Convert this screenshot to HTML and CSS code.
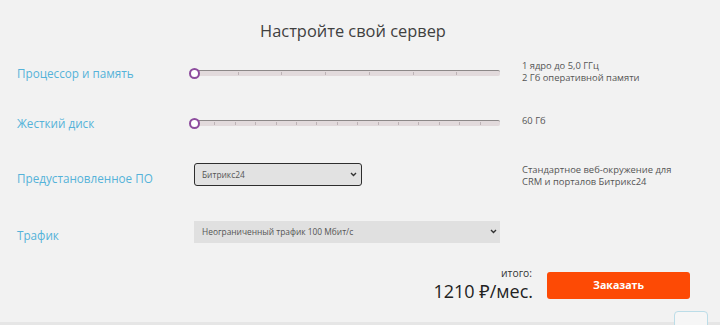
FILE: index.html
```html
<!DOCTYPE html>
<html lang="ru">

<head>
	<meta charset="UTF-8">
	<meta name="viewport" content="width=device-width, initial-scale=1.0">
	<title>Настройте свой сервер</title>
	<link rel="stylesheet" href="styles.css">
</head>

<body>
	<div class="configurator">
		<h2>Настройте свой сервер</h2>

		<div class="config-row row-cpu">
			<div class="row-label">Процессор и память</div>
			<div class="slider">
				<div class="slider-track">
					<span></span><span></span><span></span><span></span><span></span><span></span><span></span>
				</div>
				<div class="slider-thumb"></div>
			</div>
			<div class="row-info">
				<div>1 ядро до 5,0 ГГц</div>
				<div>2 Гб оперативной памяти</div>
			</div>
		</div>

		<div class="config-row row-disk">
			<div class="row-label">Жесткий диск</div>
			<div class="slider">
				<div class="slider-track">
					<span></span><span></span><span></span><span></span><span></span>
					<span></span><span></span><span></span><span></span><span></span>
					<span></span><span></span><span></span><span></span><span></span>
				</div>
				<div class="slider-thumb"></div>
			</div>
			<div class="row-info">60 Гб</div>
		</div>

		<div class="config-row row-soft">
			<div class="row-label">Предустановленное ПО</div>
			<div class="select select-focused">
				<span>Битрикс24</span>
				<svg width="7" height="5" viewBox="0 0 7 5"><path d="M1 1 L3.5 3.5 L6 1" fill="none" stroke="#333" stroke-width="1.4"/></svg>
			</div>
			<div class="row-info">
				<div>Стандартное веб-окружение для</div>
				<div>CRM и порталов Битрикс24</div>
			</div>
		</div>

		<div class="config-row row-traffic">
			<div class="row-label">Трафик</div>
			<div class="select select-wide">
				<span>Неограниченный трафик 100 Мбит/с</span>
				<svg width="7" height="5" viewBox="0 0 7 5"><path d="M1 1 L3.5 3.5 L6 1" fill="none" stroke="#333" stroke-width="1.4"/></svg>
			</div>
			<div class="row-info"></div>
		</div>

		<div class="order">
			<div class="total">
				<div class="total-caption">итого:</div>
				<div class="total-price"><b>1210</b> ₽/мес.</div>
			</div>
			<button type="button" class="order-btn">Заказать</button>
		</div>
	</div>

	<div class="page-edge"></div>
	<div class="to-top"></div>
</body>

</html>
```

FILE: styles.css
```css
* {
	box-sizing: border-box;
}

body {
	font-family: 'Open Sans', 'Noto Sans', sans-serif;
	background-color: #f2f2f2;
	margin: 0;
	height: 325px;
	overflow: hidden;
	position: relative;
}

.configurator {
	padding: 20px 30px 0 17px;
}

h2 {
	text-align: center;
	font-size: 16.4px;
	line-height: 22px;
	font-weight: 400;
	color: #404040;
	margin: 0;
	padding-right: 1px;
}

.config-row {
	display: grid;
	grid-template-columns: 173px 310px 1fr;
	align-items: center;
}

.row-cpu {
	margin-top: 18px;
	height: 26px;
}

.row-disk {
	margin-top: 24px;
	height: 26px;
}

.row-soft {
	margin-top: 26px;
	height: 28px;
}

.row-traffic {
	margin-top: 29px;
	height: 28px;
}

.row-label {
	font-size: 11.7px;
	color: #55b2d9;
	white-space: nowrap;
}

.row-soft .row-label,
.row-traffic .row-label {
	padding-top: 4px;
}

.row-info {
	margin-left: 22px;
	font-size: 9.4px;
	line-height: 12px;
	color: #555;
}

.row-cpu .row-info {
	align-self: start;
}

.row-disk .row-info {
	padding-bottom: 4px;
}

/* slider */
.slider {
	position: relative;
	height: 11px;
}

.slider-track {
	display: flex;
	margin-top: 2px;
	height: 6px;
	background-color: #e2dadc;
	border-top: 1.5px solid #8c8888;
	border-radius: 0 2px 2px 0;
	padding-left: 5px;
}

.slider-track span {
	flex: 1;
	height: 3px;
	margin-top: 1px;
	border-right: 1px solid #bdb3b6;
}

.slider-track span:last-child {
	border-right: none;
}

.slider-thumb {
	position: absolute;
	left: -1px;
	top: 0;
	width: 11px;
	height: 11px;
	border-radius: 50%;
	background-color: #fff;
	border: 2.5px solid #8d4c9e;
}

/* selects */
.select {
	display: flex;
	align-items: center;
	justify-content: space-between;
	margin-left: 4px;
	height: 23px;
	padding: 0 4px 0 8px;
	font-size: 8.4px;
	color: #555;
	background-color: #e2e2e2;
}

.select-focused {
	width: 168px;
	border: 1.5px solid #2e2e2e;
	border-radius: 3px;
	padding-left: 7px;
	margin-top: -4px;
}

.select-wide {
	width: 306px;
	height: 22px;
	background-color: #e0e0e0;
	margin-top: -3px;
	padding-right: 3px;
}

/* order */
.order {
	display: flex;
	justify-content: flex-end;
	align-items: center;
	gap: 14px;
	margin-top: 20px;
}

.total {
	text-align: right;
	color: #222;
}

.total-caption {
	font-size: 10.3px;
	line-height: 13px;
	color: #333;
	padding-right: 1px;
}

.total-price {
	font-size: 18px;
	line-height: 22px;
}

.total-price b {
	font-weight: 500;
}

.order-btn {
	width: 143px;
	height: 27px;
	margin-top: 1px;
	border: none;
	border-radius: 3px;
	background-color: #fd4a05;
	color: #fff;
	font-family: 'Open Sans', sans-serif;
	font-size: 10.6px;
	font-weight: 700;
	cursor: pointer;
}

.page-edge {
	position: absolute;
	left: 0;
	right: 0;
	top: 322px;
	height: 3px;
	background-color: #e6e6e6;
}

.to-top {
	position: absolute;
	left: 674px;
	top: 311px;
	width: 34px;
	height: 24px;
	border: 1px solid #bcdde8;
	border-radius: 4px;
	background-color: #f6f6f6;
}
```
